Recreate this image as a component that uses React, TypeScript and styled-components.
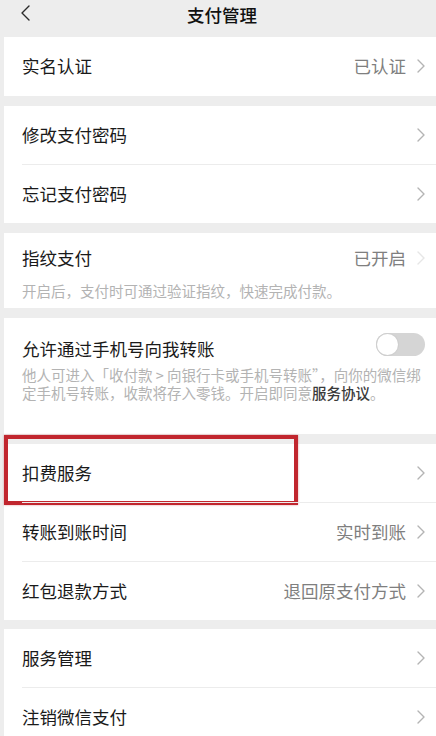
import React from 'react';
import styled, { createGlobalStyle } from 'styled-components';

const colors = {
  page: '#ededed',
  white: '#ffffff',
  text: '#1a1a1a',
  title: '#111111',
  value: '#7f7f7f',
  hint: '#b3b3b3',
  link: '#3a3a3a',
  chevron: '#b4b4b4',
  chevronFaint: '#e6e6e6',
  divider: '#ececec',
  track: '#d5d5d5',
  mark: '#c1262e',
};

const GlobalStyle = createGlobalStyle`
  * {
    box-sizing: border-box;
  }

  body {
    margin: 0;
    background: ${colors.page};
    font-family: "Noto Sans CJK SC", "Noto Sans", sans-serif;
    -webkit-font-smoothing: antialiased;
  }
`;

const Screen = styled.div`
  width: 436px;
  min-height: 736px;
  background: ${colors.page};
  overflow: hidden;
`;

const Header = styled.header`
  display: grid;
  grid-template-columns: 1fr auto 1fr;
  align-items: center;
  height: 37px;
  padding: 0 0 7px 8px;
  background: ${colors.page};
`;

const BackButton = styled.button`
  justify-self: start;
  display: flex;
  margin: 0 0 4px 12px;
  padding: 0;
  border: none;
  background: transparent;
  color: #2a2a2a;
`;

const Title = styled.h1`
  margin: 0;
  font-size: 17.5px;
  font-weight: 500;
  line-height: 22px;
  color: ${colors.title};
`;

const List = styled.div`
  display: flex;
  flex-direction: column;
  margin-left: 4px;
`;

const Group = styled.section<{ $gap: number }>`
  margin-top: ${({ $gap }) => $gap}px;
  background: ${colors.white};
`;

const Row = styled.div`
  position: relative;
  padding-left: 18px;
`;

const RowInner = styled.div<{ $divided: boolean }>`
  display: flex;
  align-items: center;
  min-height: 58.6px;
  padding-right: 11px;
  border-top: ${({ $divided }) =>
    $divided ? `1px solid ${colors.divider}` : 'none'};
`;

const Label = styled.span`
  flex: 1;
  font-size: 17.5px;
  line-height: 22px;
  color: ${colors.text};
`;

const Value = styled.span`
  margin-right: 11px;
  font-size: 17.5px;
  line-height: 22px;
  color: ${colors.value};
`;

const DetailRow = styled.div<{ $top: number; $bottom: number }>`
  padding: ${({ $top, $bottom }) => `${$top}px 9px ${$bottom}px 18px`};
`;

const TitleLine = styled.div`
  display: flex;
  align-items: center;
  height: 22px;
  padding-right: 2px;
`;

const Hint = styled.p<{ $gap: number; $lineHeight: number }>`
  margin: ${({ $gap }) => $gap}px 0 0;
  font-size: 14.5px;
  line-height: ${({ $lineHeight }) => $lineHeight}px;
  color: ${colors.hint};
  white-space: nowrap;
`;

const HintLink = styled.span`
  color: ${colors.link};
  font-weight: 500;
`;

const Track = styled.span`
  display: flex;
  flex-shrink: 0;
  align-items: center;
  width: 49px;
  height: 23px;
  margin-bottom: 8px;
  padding: 1px;
  border-radius: 12px;
  background: ${colors.track};
`;

const Knob = styled.span`
  width: 21px;
  height: 21px;
  border-radius: 50%;
  background: ${colors.white};
  box-shadow: 0 0 0 1px #cfcfcf;
`;

const Mark = styled.div`
  position: absolute;
  left: 0;
  top: -9px;
  width: 294px;
  height: 70px;
  border: 4px solid ${colors.mark};
  box-shadow: 0 0 2px rgba(193, 38, 46, 0.45);
  pointer-events: none;
`;

const Chevron = ({ faint = false }: { faint?: boolean }) => (
  <svg width="8" height="14" viewBox="0 0 8 14" fill="none">
    <path
      d="M1 1l6 6-6 6"
      stroke={faint ? colors.chevronFaint : colors.chevron}
      strokeWidth="1.4"
      strokeLinecap="round"
      strokeLinejoin="round"
    />
  </svg>
);

const BackIcon = () => (
  <svg width="10" height="16" viewBox="0 0 10 16" fill="none">
    <path
      d="M9 1L2 8l7 7"
      stroke="currentColor"
      strokeWidth="1.4"
      strokeLinecap="round"
      strokeLinejoin="round"
    />
  </svg>
);

interface Item {
  label: string;
  value?: string;
  marked?: boolean;
}

const MenuGroup = ({ items, gap }: { items: Item[]; gap: number }) => (
  <Group $gap={gap}>
    {items.map((item, i) => (
      <Row key={item.label}>
        {item.marked && <Mark />}
        <RowInner $divided={i > 0}>
          <Label>{item.label}</Label>
          {item.value && <Value>{item.value}</Value>}
          <Chevron />
        </RowInner>
      </Row>
    ))}
  </Group>
);

export default function App() {
  return (
    <Screen>
      <GlobalStyle />
      <Header>
        <BackButton type="button" aria-label="返回">
          <BackIcon />
        </BackButton>
        <Title>支付管理</Title>
      </Header>

      <List>
        <MenuGroup gap={0} items={[{ label: '实名认证', value: '已认证' }]} />
        <MenuGroup
          gap={10}
          items={[{ label: '修改支付密码' }, { label: '忘记支付密码' }]}
        />

        <Group $gap={10}>
          <DetailRow $top={14} $bottom={8}>
            <TitleLine>
              <Label>指纹支付</Label>
              <Value>已开启</Value>
              <Chevron faint />
            </TitleLine>
            <Hint $gap={13} $lineHeight={18}>
              开启后，支付时可通过验证指纹，快速完成付款。
            </Hint>
          </DetailRow>
        </Group>

        <Group $gap={10}>
          <DetailRow $top={20} $bottom={32}>
            <TitleLine>
              <Label>允许通过手机号向我转账</Label>
              <Track>
                <Knob />
              </Track>
            </TitleLine>
            <Hint $gap={6} $lineHeight={18}>
              他人可进入「收付款 &gt; 向银行卡或手机号转账”，向你的微信绑
              <br />
              定手机号转账，收款将存入零钱。开启即同意
              <HintLink>服务协议</HintLink>。
            </Hint>
          </DetailRow>
        </Group>

        <MenuGroup
          gap={10}
          items={[
            { label: '扣费服务', marked: true },
            { label: '转账到账时间', value: '实时到账' },
            { label: '红包退款方式', value: '退回原支付方式' },
          ]}
        />
        <MenuGroup
          gap={9}
          items={[{ label: '服务管理' }, { label: '注销微信支付' }]}
        />
      </List>
    </Screen>
  );
}
